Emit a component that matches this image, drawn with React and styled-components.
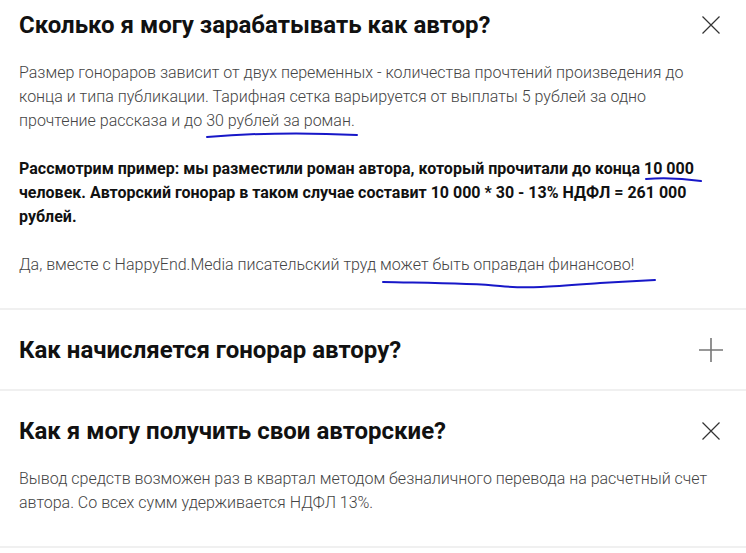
import React, { useState } from "react";
import styled, { createGlobalStyle } from "styled-components";

const GlobalStyle = createGlobalStyle`
  body {
    margin: 0;
    background: #ffffff;
    font-family: Roboto, "Liberation Sans", sans-serif;
  }
`;

const faq = [
  {
    title: "Сколько я могу зарабатывать как автор?",
    open: true,
    body: [
      {
        text: "Размер гонораров зависит от двух переменных - количества прочтений произведения до конца и типа публикации. Тарифная сетка варьируется от выплаты 5 рублей за одно прочтение рассказа и до 30 рублей за роман.",
      },
      {
        bold: true,
        text: "Рассмотрим пример: мы разместили роман автора, который прочитали до конца 10 000 человек. Авторский гонорар в таком случае составит 10 000 * 30 - 13% НДФЛ = 261 000 рублей.",
      },
      {
        text: "Да, вместе с HappyEnd.Media писательский труд может быть оправдан финансово!",
      },
    ],
  },
  {
    title: "Как начисляется гонорар автору?",
    open: false,
    body: [],
  },
  {
    title: "Как я могу получить свои авторские?",
    open: true,
    body: [
      {
        text: "Вывод средств возможен раз в квартал методом безналичного перевода на расчетный счет автора. Со всех сумм удерживается НДФЛ 13%.",
      },
    ],
  },
];

// иконка закрыть / открыть
function ToggleIcon({ open }) {
  if (open) {
    return (
      <svg width="24" height="24" viewBox="0 0 24 24">
        <path d="M3.5 3.5 L20.5 20.5 M20.5 3.5 L3.5 20.5" stroke="#333" strokeWidth="1.2" fill="none" />
      </svg>
    );
  }
  return (
    <svg width="24" height="24" viewBox="0 0 24 24">
      <path d="M12 0 V24 M0 12 H24" stroke="#777" strokeWidth="1.6" fill="none" />
    </svg>
  );
}

function FaqItem({ item }) {
  const [open, setOpen] = useState(item.open);
  return (
    <Item>
      <Header onClick={() => setOpen(!open)}>
        <Title>{item.title}</Title>
        <IconButton>
          <ToggleIcon open={open} />
        </IconButton>
      </Header>
      {open && item.body.length > 0 && (
        <Body>
          {item.body.map((p, i) => (
            <Paragraph key={i} $bold={p.bold}>
              {p.text}
            </Paragraph>
          ))}
        </Body>
      )}
    </Item>
  );
}

// синие пометки от руки поверх текста
function Scribbles() {
  return (
    <Overlay width="746" height="553" viewBox="0 0 746 553">
      <g stroke="#1717c8" strokeWidth="2" fill="none" strokeLinecap="round">
        <path d="M207 137 Q280 131 357 135" />
        <path d="M646 179 Q672 177 701 181" />
        <path d="M383 282 C430 283 470 283 500 286 C530 289 560 286 600 283 L655 280" />
      </g>
    </Overlay>
  );
}

export default function App() {
  return (
    <Root>
      <GlobalStyle />
      <List>
        {faq.map((item, i) => (
          <FaqItem key={i} item={item} />
        ))}
      </List>
      <Scribbles />
    </Root>
  );
}

const Root = styled.div`
  position: relative;
  display: flow-root;
  width: 746px;
  height: 553px;
  overflow: hidden;
`;

const List = styled.div`
  margin-top: -15px;
`;

const Item = styled.div`
  padding: 0 23px 0 19px;
  border-bottom: 2px solid #f0f0f0;
`;

const Header = styled.div`
  display: flex;
  align-items: center;
  justify-content: space-between;
  height: 79px;
  cursor: pointer;
`;

const Title = styled.h2`
  margin: 0;
  font-size: 24px;
  line-height: 28px;
  font-weight: 700;
  color: #111;
`;

const IconButton = styled.div`
  display: flex;
  width: 24px;
  height: 24px;
`;

const Body = styled.div`
  margin-top: -3px;
  padding-bottom: 31px;
`;

const Paragraph = styled.p`
  margin: 0 0 24px;
  font-size: 16px;
  line-height: 24px;
  font-weight: ${(p) => (p.$bold ? 700 : 300)};
  color: ${(p) => (p.$bold ? "#111" : "#444")};

  &:last-child {
    margin-bottom: 0;
  }
`;

const Overlay = styled.svg`
  position: absolute;
  left: 0;
  top: 0;
  pointer-events: none;
`;
